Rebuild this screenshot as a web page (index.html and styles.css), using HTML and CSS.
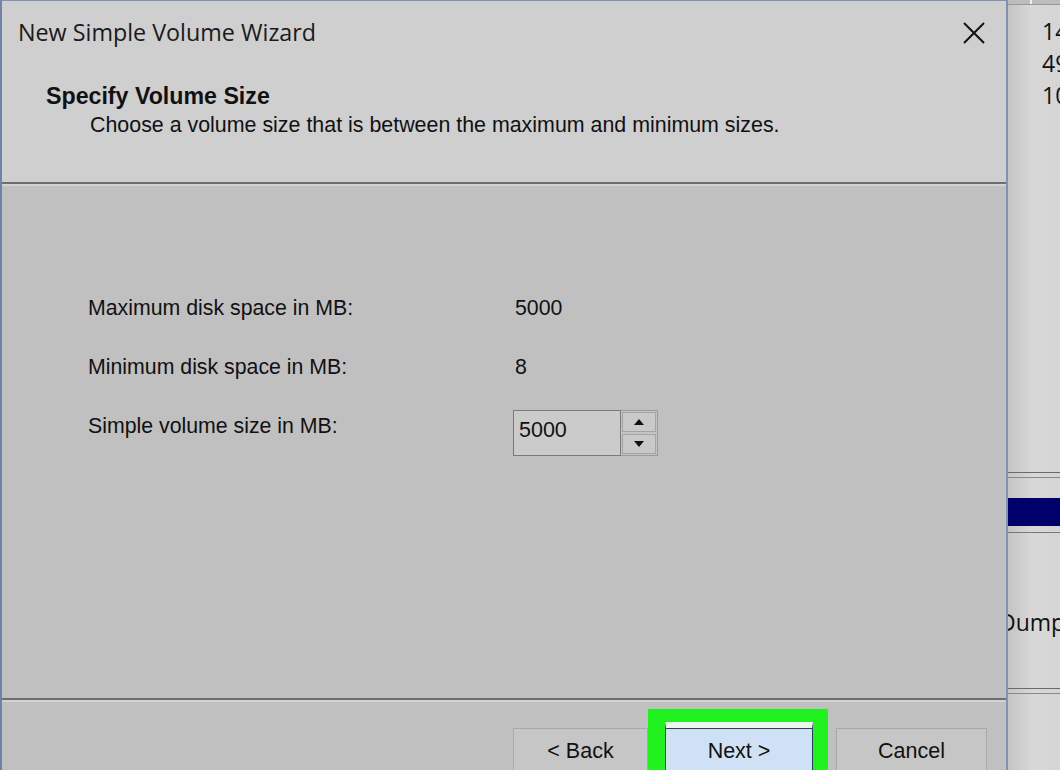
FILE: index.html
```html
<!DOCTYPE html>
<html>
<head>
    <title>New Simple Volume Wizard</title>
    <link rel="stylesheet" href="styles.css">
</head>
<body>
    <div class="dialog">
        <div class="header">
            <div class="titlebar">
                <span class="title">New Simple Volume Wizard</span>
                <svg class="close" width="22" height="22" viewBox="0 0 22 22">
                    <path d="M1 1 L21 21 M21 1 L1 21" stroke="#111" stroke-width="2" fill="none"/>
                </svg>
            </div>
            <div class="heading">Specify Volume Size</div>
            <div class="subheading">Choose a volume size that is between the maximum and minimum sizes.</div>
        </div>
        <div class="sep"></div>
        <div class="content">
            <div class="row">
                <span class="label">Maximum disk space in MB:</span>
                <span class="value">5000</span>
            </div>
            <div class="row">
                <span class="label">Minimum disk space in MB:</span>
                <span class="value">8</span>
            </div>
            <div class="row">
                <span class="label">Simple volume size in MB:</span>
                <div class="spin">
                    <div class="spin-field">5000</div>
                    <div class="spin-buttons">
                        <div class="spin-btn"><span class="tri up"></span></div>
                        <div class="spin-btn"><span class="tri down"></span></div>
                    </div>
                </div>
            </div>
        </div>
        <div class="sep"></div>
        <div class="footer">
            <div class="btn">&lt; Back</div>
            <div class="highlight">
                <div class="btn btn-default">Next &gt;</div>
            </div>
            <div class="btn btn-cancel">Cancel</div>
        </div>
    </div>
    <!-- window behind the dialog -->
    <div class="behind">
        <div class="behind-top"><span></span></div>
        <div class="nums">
            <div>14</div>
            <div>49</div>
            <div>10</div>
        </div>
        <div class="behind-lines"></div>
        <div class="blue-bar"></div>
        <div class="behind-line"></div>
        <div class="dump">Dump</div>
        <div class="behind-lines bottom"></div>
    </div>
</body>
</html>
```

FILE: styles.css
```css
body {
    margin: 0;
    width: 1060px;
    height: 770px;
    overflow: hidden;
    display: flex;
    background-color: #cdcdcd;
    font-family: "Liberation Sans", Arial, sans-serif;
    color: #111;
}
.dialog {
    width: 1004px;
    height: 769px;
    flex-shrink: 0;
    border-left: 2px solid #6d84a4;
    border-right: 2px solid #7f93b0;
    border-top: 1px solid #7f93b0;
    display: flex;
    flex-direction: column;
    background-color: #c0c0c0;
    position: relative;
    z-index: 1;
}
.header {
    height: 181px;
    flex-shrink: 0;
    background-color: #cfcfcf;
}
.titlebar {
    display: flex;
    align-items: center;
    justify-content: space-between;
    height: 62px;
    padding: 0 21px 0 16px;
}
.title {
    font-family: "Open Sans", "Noto Sans", sans-serif;
    font-size: 23.3px;
    color: #1a1a1a;
}
.close {
    margin-top: 2px;
}
.heading {
    font-weight: bold;
    font-size: 23.2px;
    padding-left: 44px;
    margin-top: 20px;
}
.subheading {
    font-size: 21.4px;
    padding-left: 88px;
    margin-top: 3px;
}
.sep {
    height: 2px;
    flex-shrink: 0;
    background-color: #6e6e6e;
    border-bottom: 2px solid #d2d2d2;
}
.content {
    height: 512px;
    flex-shrink: 0;
    padding: 110px 0 0 86px;
    box-sizing: border-box;
    display: flex;
    flex-direction: column;
    gap: 35px;
}
.row {
    display: flex;
    align-items: center;
    height: 24px;
    font-size: 21.3px;
}
.label {
    width: 427px;
}
.spin {
    display: flex;
    height: 46px;
    margin-left: -2px;
    margin-top: 14px;
}
.spin-field {
    width: 101px;
    padding: 0 0 6px 5px;
    border: 1px solid #7a7a7a;
    background-color: #cbcbcb;
    display: flex;
    align-items: center;
    font-size: 21.5px;
}
.spin-buttons {
    display: flex;
    flex-direction: column;
    gap: 2px;
    padding: 1px;
    border: 1px solid #9a9a9a;
    border-left: none;
    background-color: #c4c4c4;
}
.spin-btn {
    width: 32px;
    flex: 1;
    background-color: #c9c9c9;
    border: 1px solid #a4a4a4;
    display: flex;
    align-items: center;
    justify-content: center;
}
.tri {
    width: 0;
    height: 0;
    border-left: 5px solid transparent;
    border-right: 5px solid transparent;
}
.tri.up {
    border-bottom: 6px solid #111;
}
.tri.down {
    border-top: 6px solid #111;
}
.footer {
    flex: 1;
    min-height: 0;
    overflow: hidden;
    display: flex;
    align-items: flex-start;
    padding: 7px 0 0 511px;
    font-size: 21.5px;
}
.btn {
    width: 135px;
    height: 50px;
    flex-shrink: 0;
    margin-top: 19px;
    border: 1px solid #a8a8a8;
    background-color: #c6c6c6;
    display: flex;
    justify-content: center;
    padding-top: 10px;
    box-sizing: border-box;
}
.highlight {
    flex-shrink: 0;
    background-color: #20f220;
    padding: 13px 15px 0 17px;
    height: 70px;
    box-sizing: border-box;
}
.highlight .btn-default {
    margin-top: 0;
    width: 148px;
    height: 60px;
    border: 1px solid #293f63;
    border-top: 6px solid #eef6ee;
    background-color: #cfe1f4;
    padding-top: 11px;
    box-shadow: inset 0 1px 0 #293f63;
}
.btn-cancel {
    width: 151px;
    margin-left: 8px;
}
.behind {
    flex: 1;
    background: linear-gradient(to right, #c4c4c4, #d8d8d8 40%, #d4d4d4);
    display: flex;
    flex-direction: column;
    font-family: "Open Sans", "Noto Sans", sans-serif;
    font-size: 23px;
}
.behind-top {
    height: 4px;
    flex-shrink: 0;
    border-bottom: 1px solid #9a9a9a;
    background-color: #bdbdbd;
    display: flex;
}
.behind-top span {
    width: 22px;
    border-right: 2px solid #f0f0f0;
}
.nums {
    padding: 10px 0 0 34px;
    line-height: 32px;
    height: 449px;
    flex-shrink: 0;
}
.behind-lines {
    height: 4px;
    flex-shrink: 0;
    border-top: 1px solid #6a6a6a;
    border-bottom: 1px solid #8a8a8a;
    margin-top: 8px;
}
.blue-bar {
    height: 28px;
    flex-shrink: 0;
    margin-top: 20px;
    background-color: #00006d;
}
.behind-line {
    height: 1px;
    flex-shrink: 0;
    margin-top: 6px;
    background-color: #777;
}
.dump {
    margin: 73px 0 0 -9px;
    height: 82px;
    flex-shrink: 0;
}
.behind-lines.bottom {
    margin-top: 0;
}
```
